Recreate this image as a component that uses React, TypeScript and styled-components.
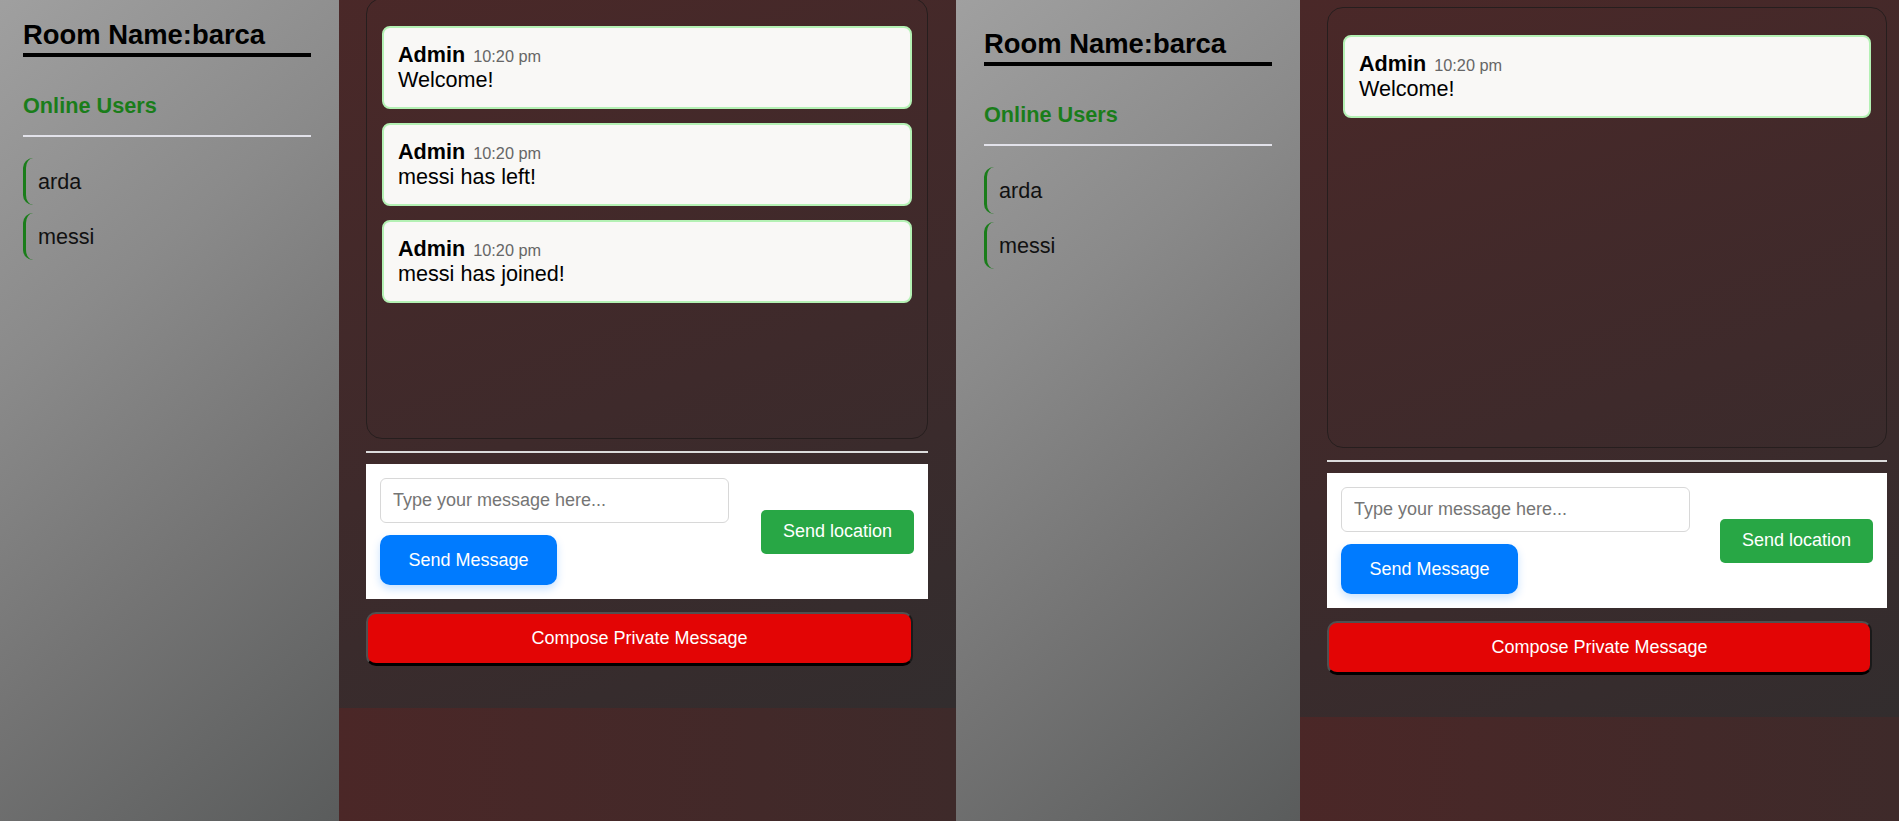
import React, { FC } from 'react';
import styled, { createGlobalStyle } from 'styled-components';

const GlobalStyle = createGlobalStyle`
  html, body, #root {
    margin: 0;
    padding: 0;
    height: 100%;
  }
  body {
    font-family: 'Liberation Sans', Arial, sans-serif;
    background: #452828;
    overflow: hidden;
  }
  * {
    box-sizing: border-box;
  }
`;

const Page = styled.div`
  display: flex;
  width: 100%;
  height: 821px;
  overflow: hidden;
`;

const Window = styled.div<{ $width?: number }>`
  ${({ $width }) => ($width ? `width: ${$width}px; flex: none;` : 'flex: 1;')}
  height: 100%;
  overflow: hidden;
  background: linear-gradient(90deg, #4b2727 35%, #3e2a2a 100%);
`;

const WindowInner = styled.div<{ $scroll: number }>`
  display: flex;
  margin-top: -${({ $scroll }) => $scroll}px;
  min-height: calc(100% + ${({ $scroll }) => $scroll}px);
`;

const Sidebar = styled.aside<{ $width: number; $padLeft: number }>`
  flex: none;
  width: ${({ $width }) => $width}px;
  padding: 28px 0 0 ${({ $padLeft }) => $padLeft}px;
  background: linear-gradient(140deg, #a0a0a0 0%, #8a8a8a 35%, #747474 65%, #5a5c5c 100%);
`;

const SidebarInner = styled.div`
  width: 288px;
`;

const RoomTitle = styled.h2`
  margin: 0;
  padding-bottom: 2px;
  font-size: 27.4px;
  font-weight: 700;
  color: #000;
  border-bottom: 4px solid #000;
`;

const UsersTitle = styled.h3`
  margin: 36px 0 0;
  font-size: 21.7px;
  font-weight: 700;
  color: #1a7d1a;
`;

const Rule = styled.div`
  height: 2px;
  margin-top: 16px;
  background: #e2e2ea;
`;

const UserList = styled.ul`
  list-style: none;
  margin: 21px 0 0;
  padding: 0;
  display: flex;
  flex-direction: column;
  gap: 8px;
`;

const UserItem = styled.li`
  height: 47px;
  display: flex;
  align-items: center;
  padding-left: 12px;
  border-left: 3px solid #1a7d1a;
  border-radius: 10px 0 0 10px;
  font-size: 21.6px;
  color: #111;
`;

const ChatColumn = styled.main<{ $width: number }>`
  flex: none;
  align-self: flex-start;
  width: ${({ $width }) => $width}px;
  padding: 7px 28px 42px 27px;
  background: linear-gradient(160deg, #4a2828 0%, #3e2a2b 55%, #322d2e 100%);
`;

const MessagesBox = styled.div`
  height: 441px;
  padding: 27px 15px 0;
  border: 1px solid #261e1e;
  border-radius: 16px;
  display: flex;
  flex-direction: column;
  gap: 14px;
`;

const MessageCard = styled.div`
  padding: 14px;
  background: #f9f8f6;
  border: 2px solid #b4f1b4;
  border-radius: 8px;
`;

const MessageHead = styled.div`
  font-size: 21.6px;
  line-height: 25px;
`;

const Sender = styled.span`
  font-weight: 700;
  color: #000;
`;

const Time = styled.span`
  margin-left: 8px;
  font-size: 16.3px;
  line-height: 1;
  color: #666;
`;

const MessageText = styled.div`
  font-size: 21.6px;
  line-height: 26px;
  color: #000;
`;

const Divider = styled.div`
  height: 2px;
  margin-top: 12px;
  background: #dcdcdc;
`;

const FormPanel = styled.form`
  margin-top: 11px;
  height: 135px;
  padding: 14px;
  background: #fff;
  display: flex;
  align-items: center;
  justify-content: space-between;
`;

const FormColumn = styled.div`
  display: flex;
  flex-direction: column;
  gap: 12px;
`;

const MessageInput = styled.input`
  width: 349px;
  height: 45px;
  padding: 0 12px;
  border: 1px solid #d8d8d8;
  border-radius: 6px;
  font-family: inherit;
  font-size: 18px;
  color: #333;
  outline: none;

  &::placeholder {
    color: #757575;
  }
`;

const Button = styled.button<{ $color: string; $width: number; $height: number; $radius: number }>`
  width: ${({ $width }) => $width}px;
  height: ${({ $height }) => $height}px;
  border: none;
  border-radius: ${({ $radius }) => $radius}px;
  background: ${({ $color }) => $color};
  color: #fff;
  font-family: inherit;
  font-size: 18px;
  cursor: pointer;
`;

const SendButton = styled(Button)`
  box-shadow: 0 4px 8px rgba(0, 123, 255, 0.22);
`;

const ComposeButton = styled.button`
  display: block;
  width: calc(100% - 15px);
  height: 54px;
  margin-top: 13px;
  border-style: solid;
  border-width: 2px 2px 3px 2px;
  border-color: #505050 #1a1a1a #000 #505050;
  border-radius: 10px;
  background: #e30505;
  color: #fff;
  font-family: inherit;
  font-size: 18px;
  cursor: pointer;
`;

type Message = { text: string; time: string };

const users = ['arda', 'messi'];

const ChatWindow: FC<{
  width?: number;
  scroll: number;
  sidebarWidth: number;
  padLeft: number;
  chatWidth: number;
  messages: Message[];
}> = ({ width, scroll, sidebarWidth, padLeft, chatWidth, messages }) => (
  <Window $width={width}>
    <WindowInner $scroll={scroll}>
      <Sidebar $width={sidebarWidth} $padLeft={padLeft}>
        <SidebarInner>
          <RoomTitle>Room Name:barca</RoomTitle>
          <UsersTitle>Online Users</UsersTitle>
          <Rule />
          <UserList>
            {users.map((u) => (
              <UserItem key={u}>{u}</UserItem>
            ))}
          </UserList>
        </SidebarInner>
      </Sidebar>
      <ChatColumn $width={chatWidth}>
        <MessagesBox>
          {messages.map((m, i) => (
            <MessageCard key={i}>
              <MessageHead>
                <Sender>Admin</Sender>
                <Time>{m.time}</Time>
              </MessageHead>
              <MessageText>{m.text}</MessageText>
            </MessageCard>
          ))}
        </MessagesBox>
        <Divider />
        <FormPanel onSubmit={(e) => e.preventDefault()}>
          <FormColumn>
            <MessageInput placeholder='Type your message here...' />
            <SendButton type='submit' $color='#007bff' $width={177} $height={50} $radius={10}>
              Send Message
            </SendButton>
          </FormColumn>
          <Button type='button' $color='#28a745' $width={153} $height={44} $radius={5}>
            Send location
          </Button>
        </FormPanel>
        <ComposeButton type='button'>Compose Private Message</ComposeButton>
      </ChatColumn>
    </WindowInner>
  </Window>
);

const App: FC = () => (
  <>
    <GlobalStyle />
    <Page>
      <ChatWindow
        width={956}
        scroll={9}
        sidebarWidth={339}
        padLeft={23}
        chatWidth={617}
        messages={[
          { text: 'Welcome!', time: '10:20 pm' },
          { text: 'messi has left!', time: '10:20 pm' },
          { text: 'messi has joined!', time: '10:20 pm' },
        ]}
      />
      <ChatWindow
        scroll={0}
        sidebarWidth={344}
        padLeft={28}
        chatWidth={615}
        messages={[{ text: 'Welcome!', time: '10:20 pm' }]}
      />
    </Page>
  </>
);

export default App;
